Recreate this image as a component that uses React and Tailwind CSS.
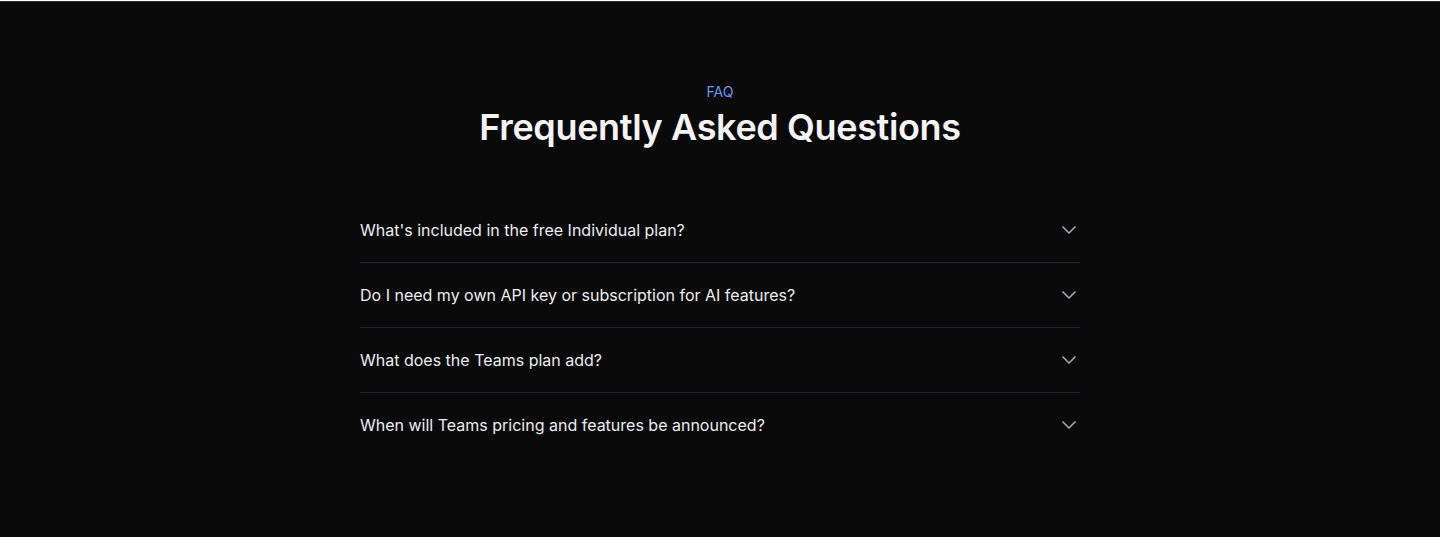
import React, { useState } from "react";
import { ChevronDown } from "lucide-react";

const faqs = [
  {
    q: "What's included in the free Individual plan?",
    a: "Everything you need to get started as an individual, free forever.",
  },
  {
    q: "Do I need my own API key or subscription for AI features?",
    a: "No. AI features work out of the box without any extra setup.",
  },
  {
    q: "What does the Teams plan add?",
    a: "Shared workspaces, admin controls and collaboration tools for your team.",
  },
  {
    q: "When will Teams pricing and features be announced?",
    a: "We'll share more details soon. Stay tuned.",
  },
];

const FaqItem = ({ item, last }) => {
  const [open, setOpen] = useState(false);
  return (
    <div className={last ? "" : "border-b border-[#25233a]"}>
      <button
        onClick={() => setOpen(!open)}
        className="w-full flex items-center justify-between py-5 text-left"
      >
        <span className="text-base leading-6 text-[#ededef]">{item.q}</span>
        <ChevronDown
          size={24}
          strokeWidth={1.75}
          className={`text-[#a1a1aa] -mr-px transition-transform ${open ? "rotate-180" : ""}`}
        />
      </button>
      {open && (
        <p className="pb-5 text-sm leading-6 text-[#a1a1aa]">{item.a}</p>
      )}
    </div>
  );
};

export default function App() {
  return (
    <div
      className="min-h-[537px] bg-[#0a0a0b] border-t border-[#2a2838] mt-px"
      style={{ fontFamily: "Inter, 'Noto Sans', sans-serif" }}
    >
      <section className="pt-[80px] pb-20">
        <div className="text-center">
          <p className="text-sm leading-5 text-[#6f93f2]">FAQ</p>
          <h2 className="mt-[5px] text-[36px] leading-10 font-semibold tracking-[-0.01em] text-[#f4f4f5]">
            Frequently Asked Questions
          </h2>
        </div>
        <div className="mx-auto mt-[51px] w-[720px]">
          {faqs.map((item, i) => (
            <FaqItem key={i} item={item} last={i === faqs.length - 1} />
          ))}
        </div>
      </section>
    </div>
  );
}
